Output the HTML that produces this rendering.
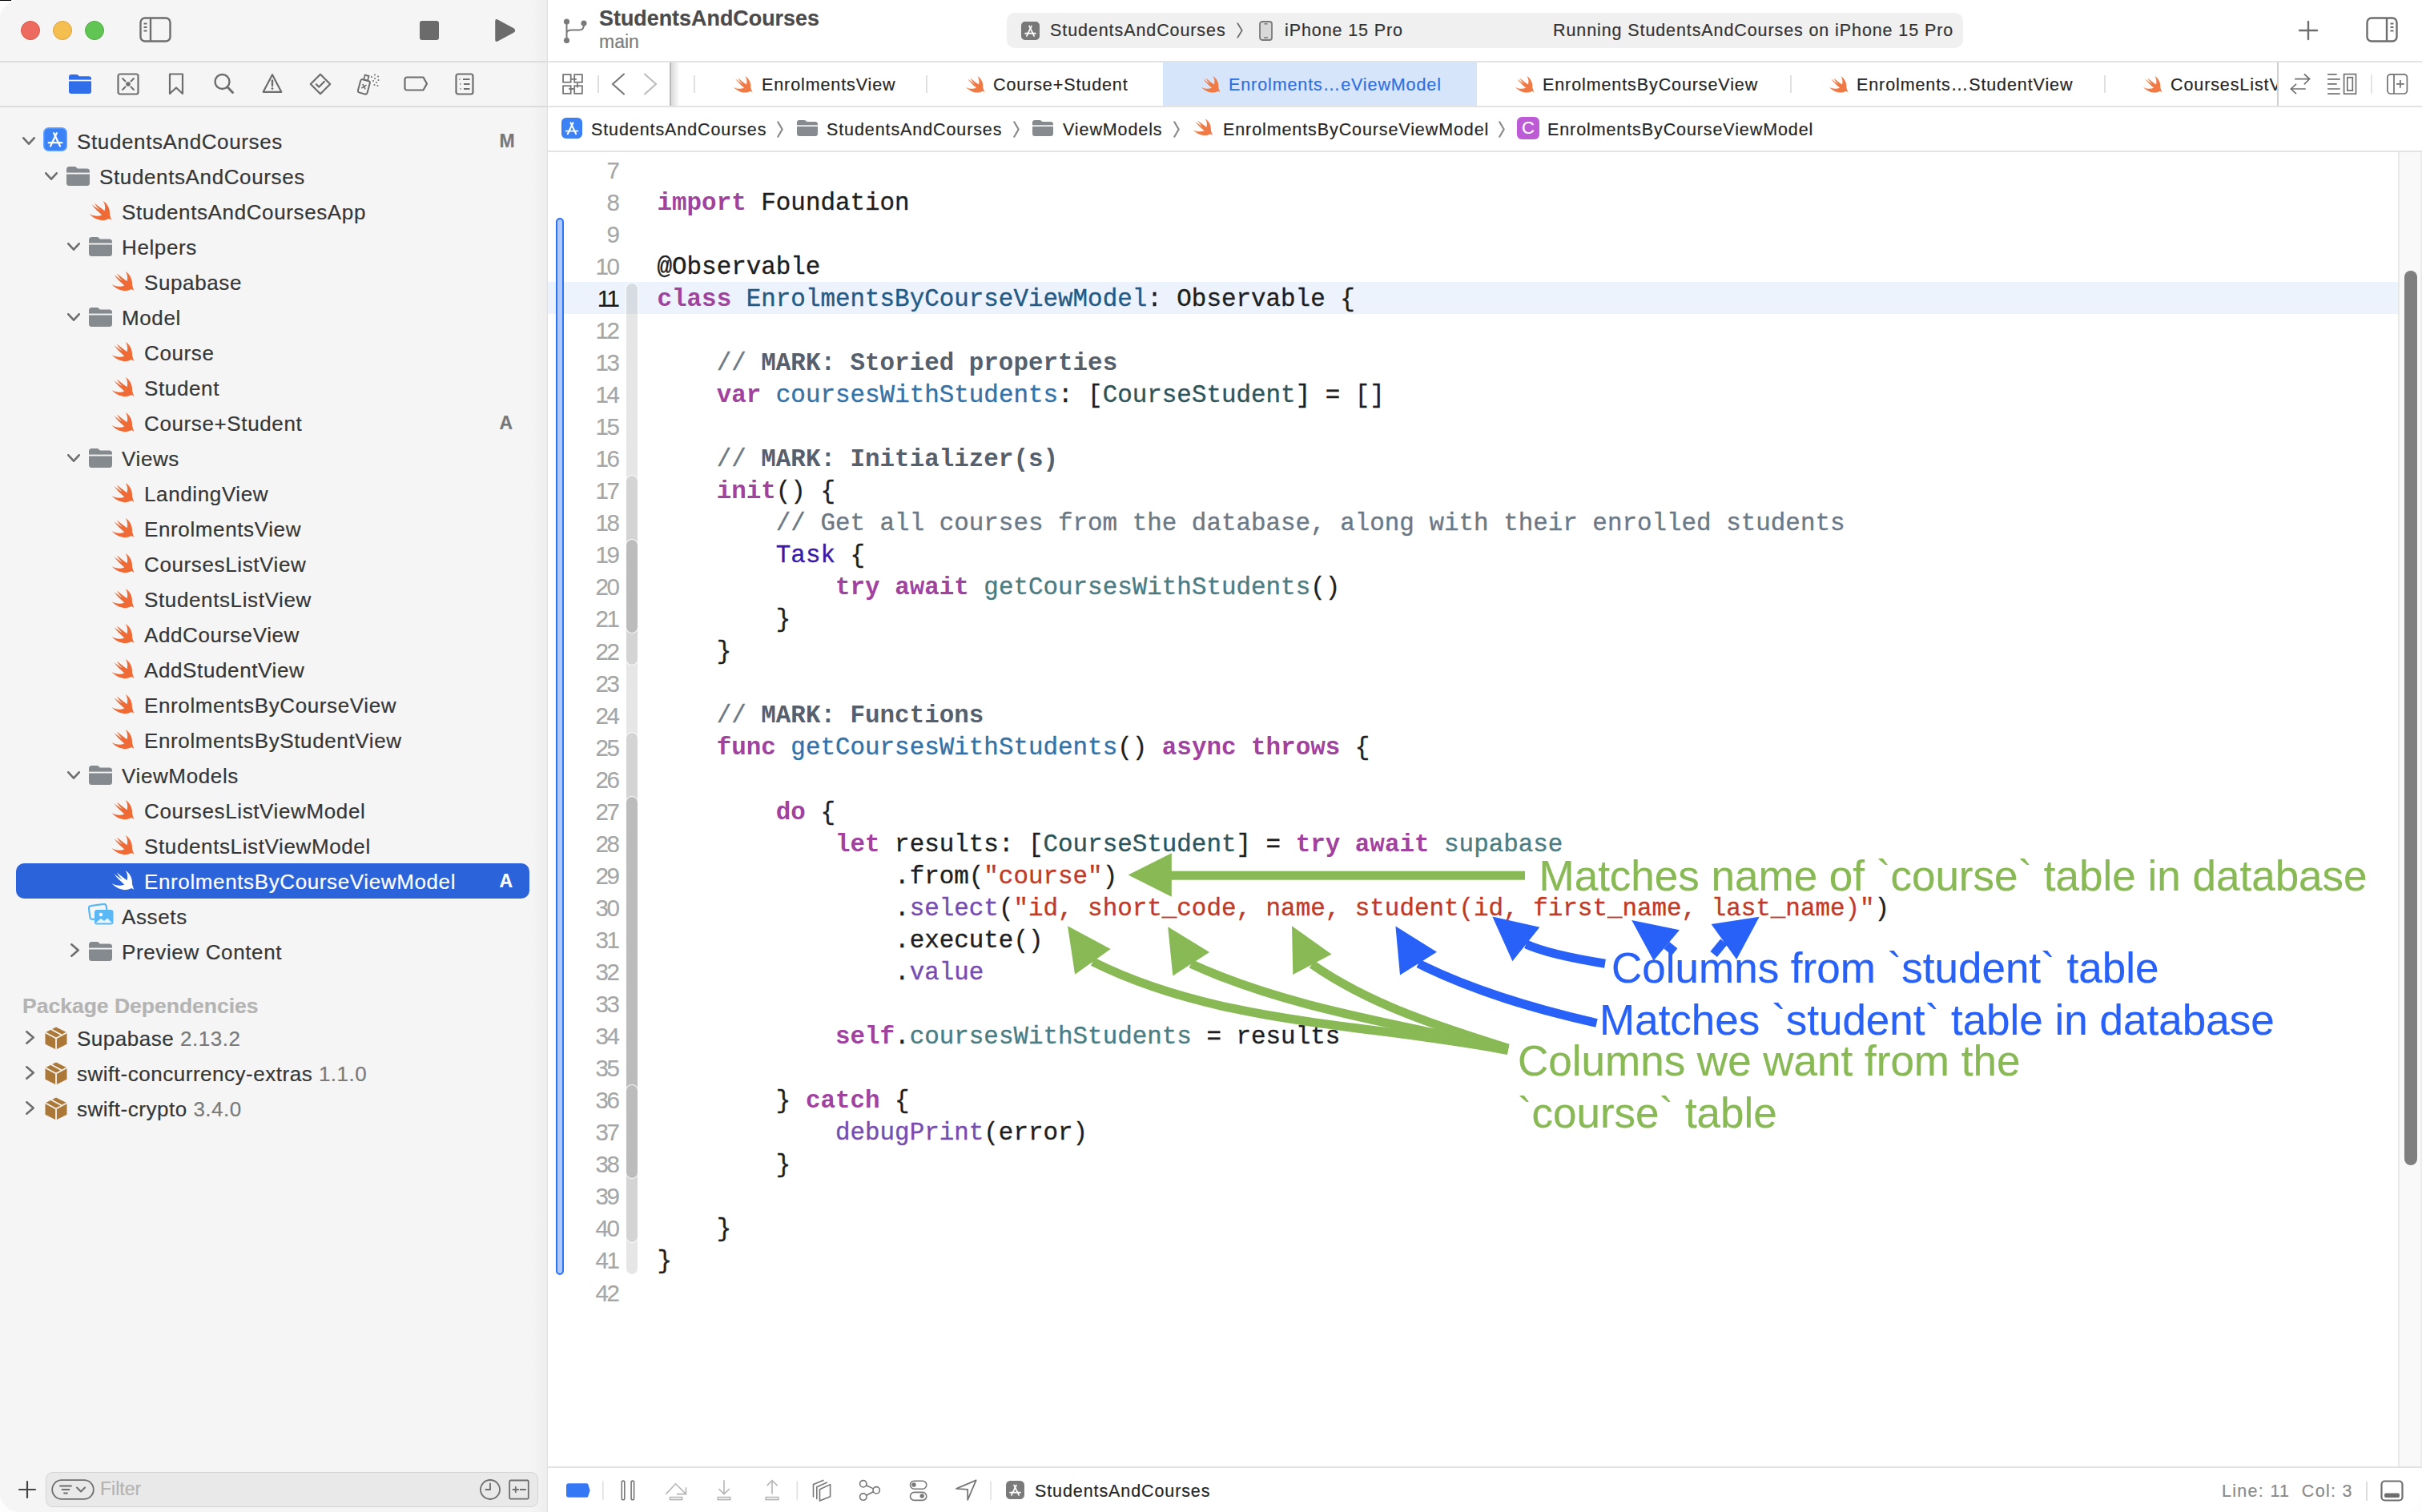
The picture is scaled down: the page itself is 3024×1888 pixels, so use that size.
<!DOCTYPE html><html><head><meta charset="utf-8"><title>Xcode</title><style>
*{margin:0;padding:0;box-sizing:border-box}
html,body{width:3024px;height:1888px;overflow:hidden;background:#fff}
body{position:relative;font-family:"Liberation Sans",sans-serif;color:#262626}
.a{position:absolute}
.t{position:absolute;white-space:pre;line-height:1;-webkit-text-stroke:0.2px currentColor}
.code{font-family:"Liberation Mono",monospace;font-size:30.9px;color:#1e1e1e;-webkit-text-stroke:0.35px currentColor}
.ln{font-family:"Liberation Sans",sans-serif;font-size:29.5px;color:#a3a3a3;text-align:right;width:82px;letter-spacing:-2.4px}
.kw{color:#a0429e;font-weight:bold;-webkit-text-stroke:0}
.cm{color:#6b7886}
.mk{color:#56606c;font-weight:bold;-webkit-text-stroke:0}
.st{color:#c03a28}
.td{color:#235a85}
.od{color:#3272a8}
.pt{color:#2d5559}
.pf{color:#4a7c82}
.syt{color:#3b18a8}
.syf{color:#764cb0}
</style></head><body>
<div class="a" style="left:0;top:0;width:683px;height:1888px;background:#f5f5f5"></div>
<div class="a" style="left:663px;top:0;width:20px;height:1888px;background:linear-gradient(90deg,rgba(0,0,0,0),rgba(0,0,0,0.03))"></div>
<div class="a" style="left:683px;top:0;width:1px;height:1888px;background:#dedede"></div>
<div class="a" style="left:0;top:76px;width:683px;height:2px;background:#dcdcdc"></div>
<div class="a" style="left:0;top:132px;width:683px;height:2px;background:#dcdcdc"></div>
<div class="a" style="left:0;top:0;width:14px;height:1px;background:#000"></div>
<div class="a" style="left:26px;top:26px;width:24px;height:24px;border-radius:50%;background:#ed6a5e;border:1px solid #d4574b"></div>
<div class="a" style="left:66px;top:26px;width:24px;height:24px;border-radius:50%;background:#f5bf4f;border:1px solid #d9a33f"></div>
<div class="a" style="left:106px;top:26px;width:24px;height:24px;border-radius:50%;background:#61c554;border:1px solid #52a944"></div>
<svg class="a" style="left:174px;top:21px;" width="40" height="32" viewBox="0 0 40 32" preserveAspectRatio="none"><rect x="1.5" y="1.5" width="37" height="29" rx="5.5" fill="none" stroke="#6e6e6e" stroke-width="2.4"/><path d="M14 1.5V30.5" stroke="#6e6e6e" stroke-width="2.4"/><path d="M5.5 8.5H9.5M5.5 13H9.5M5.5 17.5H9.5" stroke="#6e6e6e" stroke-width="1.8"/></svg>
<div class="a" style="left:524px;top:26px;width:24px;height:24px;border-radius:3px;background:#6b6b6b"></div>
<svg class="a" style="left:616px;top:23px;" width="28" height="30" viewBox="0 0 28 30" preserveAspectRatio="none"><path d="M3 3.2Q3 1 5 2.1L25.5 13.2Q27.3 15 25.5 16.8L5 27.9Q3 29 3 26.8Z" fill="#6b6b6b" stroke="#6b6b6b" stroke-width="1.5" stroke-linejoin="round"/></svg>
<svg class="a" style="left:86px;top:93px;" width="28" height="24" viewBox="0 0 28 24" preserveAspectRatio="none"><path d="M3 0H9.5C10.5 0 11 .4 11.6 1L13 2.3H25A3 3 0 0 1 28 5.3V21A3 3 0 0 1 25 24H3A3 3 0 0 1 0 21V3A3 3 0 0 1 3 0z" fill="#2f6de9"/><rect x="0" y="6.6" width="28" height="1.8" fill="#f5f5f5"/></svg>
<svg class="a" style="left:146px;top:91px;" width="28" height="28" viewBox="0 0 28 28" preserveAspectRatio="none"><rect x="1.5" y="1.5" width="25" height="25" rx="2.5" fill="none" stroke="#6e6e6e" stroke-width="2.2"/><circle cx="14" cy="14" r="2.8" fill="#6e6e6e"/><path d="M7 7L10.5 10.5M21 7L17.5 10.5M7 21L10.5 17.5M21 21L17.5 17.5" stroke="#6e6e6e" stroke-width="2" stroke-linecap="round"/></svg>
<svg class="a" style="left:210px;top:91px;" width="20" height="28" viewBox="0 0 20 28" preserveAspectRatio="none"><path d="M2 1.5H18V26L10 18.5L2 26Z" fill="none" stroke="#6e6e6e" stroke-width="2.2" stroke-linejoin="round"/></svg>
<svg class="a" style="left:266px;top:91px;" width="28" height="28" viewBox="0 0 28 28" preserveAspectRatio="none"><circle cx="11.5" cy="11" r="9" fill="none" stroke="#6e6e6e" stroke-width="2.4"/><path d="M18 17.8L24.5 24.5" stroke="#6e6e6e" stroke-width="3" stroke-linecap="round"/></svg>
<svg class="a" style="left:327px;top:91px;" width="26" height="26" viewBox="0 0 26 26" preserveAspectRatio="none"><path d="M13 2.2L24.3 23.8H1.7Z" fill="none" stroke="#6e6e6e" stroke-width="2.2" stroke-linejoin="round"/><path d="M13 9.5V16" stroke="#6e6e6e" stroke-width="2.4" stroke-linecap="round"/><circle cx="13" cy="19.6" r="1.4" fill="#6e6e6e"/></svg>
<svg class="a" style="left:386px;top:91px;" width="28" height="28" viewBox="0 0 28 28" preserveAspectRatio="none"><path d="M14 1.8L26.2 14L14 26.2L1.8 14Z" fill="none" stroke="#6e6e6e" stroke-width="2.2" stroke-linejoin="round"/><path d="M8.8 14.2L12.4 17.6L19 10.8" fill="none" stroke="#6e6e6e" stroke-width="2.2" stroke-linecap="round" stroke-linejoin="round"/></svg>
<svg class="a" style="left:445px;top:91px;" width="31" height="28" viewBox="0 0 31 28" preserveAspectRatio="none"><g transform="rotate(15 10 17)"><rect x="3.5" y="9" width="12" height="17" rx="2.5" fill="none" stroke="#6e6e6e" stroke-width="2"/><rect x="7" y="3" width="5" height="6" fill="none" stroke="#6e6e6e" stroke-width="1.8"/><path d="M7 14.5L12 20M12 14.5L7 20" stroke="#6e6e6e" stroke-width="1.6"/></g><g fill="#6e6e6e"><circle cx="19" cy="5" r="1"/><circle cx="23" cy="2.5" r="1"/><circle cx="23" cy="7" r="1"/><circle cx="27" cy="4.5" r="1"/><circle cx="21" cy="10" r="1"/><circle cx="25" cy="12" r="1"/><circle cx="27.5" cy="9" r="1"/><circle cx="22.5" cy="15" r="1"/><circle cx="26.5" cy="16" r="1"/></g></svg>
<svg class="a" style="left:504px;top:95px;" width="31" height="19" viewBox="0 0 31 19" preserveAspectRatio="none"><path d="M4 1.5H24.5L29 9.5L24.5 17.5H4A2.5 2.5 0 0 1 1.5 15V4A2.5 2.5 0 0 1 4 1.5Z" fill="none" stroke="#6e6e6e" stroke-width="2.2" stroke-linejoin="round"/></svg>
<svg class="a" style="left:568px;top:91px;" width="24" height="28" viewBox="0 0 24 28" preserveAspectRatio="none"><rect x="1.5" y="1.5" width="21" height="25" rx="2.5" fill="none" stroke="#6e6e6e" stroke-width="2.2"/><path d="M10 8H18.5M11 14H18.5M11 20H18.5" stroke="#6e6e6e" stroke-width="2"/><path d="M5.5 8H6.5M6.5 14H7.5M6.5 20H7.5" stroke="#6e6e6e" stroke-width="2"/></svg>
<div class="a" style="left:20px;top:1078px;width:641px;height:44px;border-radius:10px;background:#2a63da"></div>
<svg class="a" style="left:28px;top:171.20000000000002px;" width="16" height="10" viewBox="0 0 16 10" preserveAspectRatio="none"><path d="M1.3 1.3L8.0 8.7L14.7 1.3" fill="none" stroke="#6e6e6e" stroke-width="2.6" stroke-linecap="round" stroke-linejoin="round"/></svg>
<svg class="a" style="left:54px;top:159.4px;" width="30" height="30" viewBox="0 0 30 30" preserveAspectRatio="none"><rect x="0.75" y="0.75" width="28.5" height="28.5" rx="6" fill="#3b82f6" stroke="#63a4ff" stroke-width="1.5"/><g stroke="#fff" stroke-width="2.25" stroke-linecap="round" fill="none"><path d="M9.00 23.40L16.80 7.20"/><path d="M13.20 7.20L21.00 23.40"/><path d="M6.60 19.20H23.40"/></g></svg>
<div class="t" style="left:96.0px;top:163.89px;font-size:26px;color:#363636;font-weight:normal;font-family:'Liberation Sans',sans-serif;letter-spacing:0.62px;">StudentsAndCourses</div>
<div class="t" style="left:623.6px;top:165.43px;font-size:23px;color:#777777;font-weight:bold;font-family:'Liberation Sans',sans-serif;letter-spacing:0px;">M</div>
<svg class="a" style="left:56px;top:215.20000000000002px;" width="16" height="10" viewBox="0 0 16 10" preserveAspectRatio="none"><path d="M1.3 1.3L8.0 8.7L14.7 1.3" fill="none" stroke="#6e6e6e" stroke-width="2.6" stroke-linecap="round" stroke-linejoin="round"/></svg>
<svg class="a" style="left:83px;top:208.20000000000002px;" width="29" height="24" viewBox="0 0 29 24" preserveAspectRatio="none"><path d="M3.5 0H10c1 0 1.6.3 2.3 1l1.5 1.4H25.5A3.5 3.5 0 0 1 29 5.9V20.5A3.5 3.5 0 0 1 25.5 24H3.5A3.5 3.5 0 0 1 0 20.5V3.5A3.5 3.5 0 0 1 3.5 0z" fill="#858a8f"/><rect x="0" y="7.6" width="29" height="1.9" fill="#f5f5f5"/></svg>
<div class="t" style="left:124.0px;top:207.89px;font-size:26px;color:#363636;font-weight:normal;font-family:'Liberation Sans',sans-serif;letter-spacing:0.62px;">StudentsAndCourses</div>
<svg class="a" style="left:108.0px;top:246.0px;" width="36.0" height="34.0" viewBox="0 0 36 34" preserveAspectRatio="none"><path d="M20.7 4.9C25.5 8 29.6 13.5 29 22L31.3 29C30 27.8 28.8 27.2 27.6 27.3C22 30.5 12 30.2 3.4 21.1C9 24.3 15 24.2 19.3 22.4C14.5 18.5 9.5 13.5 6.3 9C10 12 13.5 14.5 16.6 16.3C13.8 13.5 11.5 10.5 9.9 7.6C14 10.8 18.5 14.5 22.6 17.2C23.8 13 23.2 8.5 20.7 4.9Z" fill="#f06a36"/></svg>
<div class="t" style="left:152.0px;top:251.89px;font-size:26px;color:#363636;font-weight:normal;font-family:'Liberation Sans',sans-serif;letter-spacing:0.62px;">StudentsAndCoursesApp</div>
<svg class="a" style="left:84px;top:303.2px;" width="16" height="10" viewBox="0 0 16 10" preserveAspectRatio="none"><path d="M1.3 1.3L8.0 8.7L14.7 1.3" fill="none" stroke="#6e6e6e" stroke-width="2.6" stroke-linecap="round" stroke-linejoin="round"/></svg>
<svg class="a" style="left:111px;top:296.2px;" width="29" height="24" viewBox="0 0 29 24" preserveAspectRatio="none"><path d="M3.5 0H10c1 0 1.6.3 2.3 1l1.5 1.4H25.5A3.5 3.5 0 0 1 29 5.9V20.5A3.5 3.5 0 0 1 25.5 24H3.5A3.5 3.5 0 0 1 0 20.5V3.5A3.5 3.5 0 0 1 3.5 0z" fill="#858a8f"/><rect x="0" y="7.6" width="29" height="1.9" fill="#f5f5f5"/></svg>
<div class="t" style="left:152.0px;top:295.89px;font-size:26px;color:#363636;font-weight:normal;font-family:'Liberation Sans',sans-serif;letter-spacing:0.62px;">Helpers</div>
<svg class="a" style="left:136.0px;top:334.0px;" width="36.0" height="34.0" viewBox="0 0 36 34" preserveAspectRatio="none"><path d="M20.7 4.9C25.5 8 29.6 13.5 29 22L31.3 29C30 27.8 28.8 27.2 27.6 27.3C22 30.5 12 30.2 3.4 21.1C9 24.3 15 24.2 19.3 22.4C14.5 18.5 9.5 13.5 6.3 9C10 12 13.5 14.5 16.6 16.3C13.8 13.5 11.5 10.5 9.9 7.6C14 10.8 18.5 14.5 22.6 17.2C23.8 13 23.2 8.5 20.7 4.9Z" fill="#f06a36"/></svg>
<div class="t" style="left:180.0px;top:339.89px;font-size:26px;color:#363636;font-weight:normal;font-family:'Liberation Sans',sans-serif;letter-spacing:0.62px;">Supabase</div>
<svg class="a" style="left:84px;top:391.2px;" width="16" height="10" viewBox="0 0 16 10" preserveAspectRatio="none"><path d="M1.3 1.3L8.0 8.7L14.7 1.3" fill="none" stroke="#6e6e6e" stroke-width="2.6" stroke-linecap="round" stroke-linejoin="round"/></svg>
<svg class="a" style="left:111px;top:384.2px;" width="29" height="24" viewBox="0 0 29 24" preserveAspectRatio="none"><path d="M3.5 0H10c1 0 1.6.3 2.3 1l1.5 1.4H25.5A3.5 3.5 0 0 1 29 5.9V20.5A3.5 3.5 0 0 1 25.5 24H3.5A3.5 3.5 0 0 1 0 20.5V3.5A3.5 3.5 0 0 1 3.5 0z" fill="#858a8f"/><rect x="0" y="7.6" width="29" height="1.9" fill="#f5f5f5"/></svg>
<div class="t" style="left:152.0px;top:383.89px;font-size:26px;color:#363636;font-weight:normal;font-family:'Liberation Sans',sans-serif;letter-spacing:0.62px;">Model</div>
<svg class="a" style="left:136.0px;top:422.0px;" width="36.0" height="34.0" viewBox="0 0 36 34" preserveAspectRatio="none"><path d="M20.7 4.9C25.5 8 29.6 13.5 29 22L31.3 29C30 27.8 28.8 27.2 27.6 27.3C22 30.5 12 30.2 3.4 21.1C9 24.3 15 24.2 19.3 22.4C14.5 18.5 9.5 13.5 6.3 9C10 12 13.5 14.5 16.6 16.3C13.8 13.5 11.5 10.5 9.9 7.6C14 10.8 18.5 14.5 22.6 17.2C23.8 13 23.2 8.5 20.7 4.9Z" fill="#f06a36"/></svg>
<div class="t" style="left:180.0px;top:427.89px;font-size:26px;color:#363636;font-weight:normal;font-family:'Liberation Sans',sans-serif;letter-spacing:0.62px;">Course</div>
<svg class="a" style="left:136.0px;top:466.0px;" width="36.0" height="34.0" viewBox="0 0 36 34" preserveAspectRatio="none"><path d="M20.7 4.9C25.5 8 29.6 13.5 29 22L31.3 29C30 27.8 28.8 27.2 27.6 27.3C22 30.5 12 30.2 3.4 21.1C9 24.3 15 24.2 19.3 22.4C14.5 18.5 9.5 13.5 6.3 9C10 12 13.5 14.5 16.6 16.3C13.8 13.5 11.5 10.5 9.9 7.6C14 10.8 18.5 14.5 22.6 17.2C23.8 13 23.2 8.5 20.7 4.9Z" fill="#f06a36"/></svg>
<div class="t" style="left:180.0px;top:471.89px;font-size:26px;color:#363636;font-weight:normal;font-family:'Liberation Sans',sans-serif;letter-spacing:0.62px;">Student</div>
<svg class="a" style="left:136.0px;top:510.0px;" width="36.0" height="34.0" viewBox="0 0 36 34" preserveAspectRatio="none"><path d="M20.7 4.9C25.5 8 29.6 13.5 29 22L31.3 29C30 27.8 28.8 27.2 27.6 27.3C22 30.5 12 30.2 3.4 21.1C9 24.3 15 24.2 19.3 22.4C14.5 18.5 9.5 13.5 6.3 9C10 12 13.5 14.5 16.6 16.3C13.8 13.5 11.5 10.5 9.9 7.6C14 10.8 18.5 14.5 22.6 17.2C23.8 13 23.2 8.5 20.7 4.9Z" fill="#f06a36"/></svg>
<div class="t" style="left:180.0px;top:515.89px;font-size:26px;color:#363636;font-weight:normal;font-family:'Liberation Sans',sans-serif;letter-spacing:0.62px;">Course+Student</div>
<div class="t" style="left:623.6px;top:517.43px;font-size:23px;color:#777777;font-weight:bold;font-family:'Liberation Sans',sans-serif;letter-spacing:0px;">A</div>
<svg class="a" style="left:84px;top:567.1999999999999px;" width="16" height="10" viewBox="0 0 16 10" preserveAspectRatio="none"><path d="M1.3 1.3L8.0 8.7L14.7 1.3" fill="none" stroke="#6e6e6e" stroke-width="2.6" stroke-linecap="round" stroke-linejoin="round"/></svg>
<svg class="a" style="left:111px;top:560.1999999999999px;" width="29" height="24" viewBox="0 0 29 24" preserveAspectRatio="none"><path d="M3.5 0H10c1 0 1.6.3 2.3 1l1.5 1.4H25.5A3.5 3.5 0 0 1 29 5.9V20.5A3.5 3.5 0 0 1 25.5 24H3.5A3.5 3.5 0 0 1 0 20.5V3.5A3.5 3.5 0 0 1 3.5 0z" fill="#858a8f"/><rect x="0" y="7.6" width="29" height="1.9" fill="#f5f5f5"/></svg>
<div class="t" style="left:152.0px;top:559.89px;font-size:26px;color:#363636;font-weight:normal;font-family:'Liberation Sans',sans-serif;letter-spacing:0.62px;">Views</div>
<svg class="a" style="left:136.0px;top:598.0px;" width="36.0" height="34.0" viewBox="0 0 36 34" preserveAspectRatio="none"><path d="M20.7 4.9C25.5 8 29.6 13.5 29 22L31.3 29C30 27.8 28.8 27.2 27.6 27.3C22 30.5 12 30.2 3.4 21.1C9 24.3 15 24.2 19.3 22.4C14.5 18.5 9.5 13.5 6.3 9C10 12 13.5 14.5 16.6 16.3C13.8 13.5 11.5 10.5 9.9 7.6C14 10.8 18.5 14.5 22.6 17.2C23.8 13 23.2 8.5 20.7 4.9Z" fill="#f06a36"/></svg>
<div class="t" style="left:180.0px;top:603.89px;font-size:26px;color:#363636;font-weight:normal;font-family:'Liberation Sans',sans-serif;letter-spacing:0.62px;">LandingView</div>
<svg class="a" style="left:136.0px;top:642.0px;" width="36.0" height="34.0" viewBox="0 0 36 34" preserveAspectRatio="none"><path d="M20.7 4.9C25.5 8 29.6 13.5 29 22L31.3 29C30 27.8 28.8 27.2 27.6 27.3C22 30.5 12 30.2 3.4 21.1C9 24.3 15 24.2 19.3 22.4C14.5 18.5 9.5 13.5 6.3 9C10 12 13.5 14.5 16.6 16.3C13.8 13.5 11.5 10.5 9.9 7.6C14 10.8 18.5 14.5 22.6 17.2C23.8 13 23.2 8.5 20.7 4.9Z" fill="#f06a36"/></svg>
<div class="t" style="left:180.0px;top:647.89px;font-size:26px;color:#363636;font-weight:normal;font-family:'Liberation Sans',sans-serif;letter-spacing:0.62px;">EnrolmentsView</div>
<svg class="a" style="left:136.0px;top:686.0px;" width="36.0" height="34.0" viewBox="0 0 36 34" preserveAspectRatio="none"><path d="M20.7 4.9C25.5 8 29.6 13.5 29 22L31.3 29C30 27.8 28.8 27.2 27.6 27.3C22 30.5 12 30.2 3.4 21.1C9 24.3 15 24.2 19.3 22.4C14.5 18.5 9.5 13.5 6.3 9C10 12 13.5 14.5 16.6 16.3C13.8 13.5 11.5 10.5 9.9 7.6C14 10.8 18.5 14.5 22.6 17.2C23.8 13 23.2 8.5 20.7 4.9Z" fill="#f06a36"/></svg>
<div class="t" style="left:180.0px;top:691.89px;font-size:26px;color:#363636;font-weight:normal;font-family:'Liberation Sans',sans-serif;letter-spacing:0.62px;">CoursesListView</div>
<svg class="a" style="left:136.0px;top:730.0px;" width="36.0" height="34.0" viewBox="0 0 36 34" preserveAspectRatio="none"><path d="M20.7 4.9C25.5 8 29.6 13.5 29 22L31.3 29C30 27.8 28.8 27.2 27.6 27.3C22 30.5 12 30.2 3.4 21.1C9 24.3 15 24.2 19.3 22.4C14.5 18.5 9.5 13.5 6.3 9C10 12 13.5 14.5 16.6 16.3C13.8 13.5 11.5 10.5 9.9 7.6C14 10.8 18.5 14.5 22.6 17.2C23.8 13 23.2 8.5 20.7 4.9Z" fill="#f06a36"/></svg>
<div class="t" style="left:180.0px;top:735.89px;font-size:26px;color:#363636;font-weight:normal;font-family:'Liberation Sans',sans-serif;letter-spacing:0.62px;">StudentsListView</div>
<svg class="a" style="left:136.0px;top:774.0px;" width="36.0" height="34.0" viewBox="0 0 36 34" preserveAspectRatio="none"><path d="M20.7 4.9C25.5 8 29.6 13.5 29 22L31.3 29C30 27.8 28.8 27.2 27.6 27.3C22 30.5 12 30.2 3.4 21.1C9 24.3 15 24.2 19.3 22.4C14.5 18.5 9.5 13.5 6.3 9C10 12 13.5 14.5 16.6 16.3C13.8 13.5 11.5 10.5 9.9 7.6C14 10.8 18.5 14.5 22.6 17.2C23.8 13 23.2 8.5 20.7 4.9Z" fill="#f06a36"/></svg>
<div class="t" style="left:180.0px;top:779.89px;font-size:26px;color:#363636;font-weight:normal;font-family:'Liberation Sans',sans-serif;letter-spacing:0.62px;">AddCourseView</div>
<svg class="a" style="left:136.0px;top:818.0px;" width="36.0" height="34.0" viewBox="0 0 36 34" preserveAspectRatio="none"><path d="M20.7 4.9C25.5 8 29.6 13.5 29 22L31.3 29C30 27.8 28.8 27.2 27.6 27.3C22 30.5 12 30.2 3.4 21.1C9 24.3 15 24.2 19.3 22.4C14.5 18.5 9.5 13.5 6.3 9C10 12 13.5 14.5 16.6 16.3C13.8 13.5 11.5 10.5 9.9 7.6C14 10.8 18.5 14.5 22.6 17.2C23.8 13 23.2 8.5 20.7 4.9Z" fill="#f06a36"/></svg>
<div class="t" style="left:180.0px;top:823.89px;font-size:26px;color:#363636;font-weight:normal;font-family:'Liberation Sans',sans-serif;letter-spacing:0.62px;">AddStudentView</div>
<svg class="a" style="left:136.0px;top:862.0px;" width="36.0" height="34.0" viewBox="0 0 36 34" preserveAspectRatio="none"><path d="M20.7 4.9C25.5 8 29.6 13.5 29 22L31.3 29C30 27.8 28.8 27.2 27.6 27.3C22 30.5 12 30.2 3.4 21.1C9 24.3 15 24.2 19.3 22.4C14.5 18.5 9.5 13.5 6.3 9C10 12 13.5 14.5 16.6 16.3C13.8 13.5 11.5 10.5 9.9 7.6C14 10.8 18.5 14.5 22.6 17.2C23.8 13 23.2 8.5 20.7 4.9Z" fill="#f06a36"/></svg>
<div class="t" style="left:180.0px;top:867.89px;font-size:26px;color:#363636;font-weight:normal;font-family:'Liberation Sans',sans-serif;letter-spacing:0.62px;">EnrolmentsByCourseView</div>
<svg class="a" style="left:136.0px;top:906.0px;" width="36.0" height="34.0" viewBox="0 0 36 34" preserveAspectRatio="none"><path d="M20.7 4.9C25.5 8 29.6 13.5 29 22L31.3 29C30 27.8 28.8 27.2 27.6 27.3C22 30.5 12 30.2 3.4 21.1C9 24.3 15 24.2 19.3 22.4C14.5 18.5 9.5 13.5 6.3 9C10 12 13.5 14.5 16.6 16.3C13.8 13.5 11.5 10.5 9.9 7.6C14 10.8 18.5 14.5 22.6 17.2C23.8 13 23.2 8.5 20.7 4.9Z" fill="#f06a36"/></svg>
<div class="t" style="left:180.0px;top:911.89px;font-size:26px;color:#363636;font-weight:normal;font-family:'Liberation Sans',sans-serif;letter-spacing:0.62px;">EnrolmentsByStudentView</div>
<svg class="a" style="left:84px;top:963.1999999999999px;" width="16" height="10" viewBox="0 0 16 10" preserveAspectRatio="none"><path d="M1.3 1.3L8.0 8.7L14.7 1.3" fill="none" stroke="#6e6e6e" stroke-width="2.6" stroke-linecap="round" stroke-linejoin="round"/></svg>
<svg class="a" style="left:111px;top:956.1999999999999px;" width="29" height="24" viewBox="0 0 29 24" preserveAspectRatio="none"><path d="M3.5 0H10c1 0 1.6.3 2.3 1l1.5 1.4H25.5A3.5 3.5 0 0 1 29 5.9V20.5A3.5 3.5 0 0 1 25.5 24H3.5A3.5 3.5 0 0 1 0 20.5V3.5A3.5 3.5 0 0 1 3.5 0z" fill="#858a8f"/><rect x="0" y="7.6" width="29" height="1.9" fill="#f5f5f5"/></svg>
<div class="t" style="left:152.0px;top:955.89px;font-size:26px;color:#363636;font-weight:normal;font-family:'Liberation Sans',sans-serif;letter-spacing:0.62px;">ViewModels</div>
<svg class="a" style="left:136.0px;top:994.0px;" width="36.0" height="34.0" viewBox="0 0 36 34" preserveAspectRatio="none"><path d="M20.7 4.9C25.5 8 29.6 13.5 29 22L31.3 29C30 27.8 28.8 27.2 27.6 27.3C22 30.5 12 30.2 3.4 21.1C9 24.3 15 24.2 19.3 22.4C14.5 18.5 9.5 13.5 6.3 9C10 12 13.5 14.5 16.6 16.3C13.8 13.5 11.5 10.5 9.9 7.6C14 10.8 18.5 14.5 22.6 17.2C23.8 13 23.2 8.5 20.7 4.9Z" fill="#f06a36"/></svg>
<div class="t" style="left:180.0px;top:999.89px;font-size:26px;color:#363636;font-weight:normal;font-family:'Liberation Sans',sans-serif;letter-spacing:0.62px;">CoursesListViewModel</div>
<svg class="a" style="left:136.0px;top:1038.0px;" width="36.0" height="34.0" viewBox="0 0 36 34" preserveAspectRatio="none"><path d="M20.7 4.9C25.5 8 29.6 13.5 29 22L31.3 29C30 27.8 28.8 27.2 27.6 27.3C22 30.5 12 30.2 3.4 21.1C9 24.3 15 24.2 19.3 22.4C14.5 18.5 9.5 13.5 6.3 9C10 12 13.5 14.5 16.6 16.3C13.8 13.5 11.5 10.5 9.9 7.6C14 10.8 18.5 14.5 22.6 17.2C23.8 13 23.2 8.5 20.7 4.9Z" fill="#f06a36"/></svg>
<div class="t" style="left:180.0px;top:1043.89px;font-size:26px;color:#363636;font-weight:normal;font-family:'Liberation Sans',sans-serif;letter-spacing:0.62px;">StudentsListViewModel</div>
<svg class="a" style="left:136.0px;top:1082.0px;" width="36.0" height="34.0" viewBox="0 0 36 34" preserveAspectRatio="none"><path d="M20.7 4.9C25.5 8 29.6 13.5 29 22L31.3 29C30 27.8 28.8 27.2 27.6 27.3C22 30.5 12 30.2 3.4 21.1C9 24.3 15 24.2 19.3 22.4C14.5 18.5 9.5 13.5 6.3 9C10 12 13.5 14.5 16.6 16.3C13.8 13.5 11.5 10.5 9.9 7.6C14 10.8 18.5 14.5 22.6 17.2C23.8 13 23.2 8.5 20.7 4.9Z" fill="#ffffff"/></svg>
<div class="t" style="left:180.0px;top:1087.89px;font-size:26px;color:#ffffff;font-weight:normal;font-family:'Liberation Sans',sans-serif;letter-spacing:0.62px;">EnrolmentsByCourseViewModel</div>
<div class="t" style="left:623.6px;top:1089.43px;font-size:23px;color:#ffffff;font-weight:bold;font-family:'Liberation Sans',sans-serif;letter-spacing:0px;">A</div>
<svg class="a" style="left:109.5px;top:1128.4px;" width="33" height="28" viewBox="0 0 33 28" preserveAspectRatio="none"><rect x="1.5" y="2" width="22" height="17" rx="3" transform="rotate(-8 12 10)" fill="#f5f5f5" stroke="#5ab8f5" stroke-width="2.2"/><rect x="8" y="8" width="23.5" height="18.5" rx="3" fill="#5ab8f5"/><circle cx="16" cy="14" r="2.2" fill="#fff"/><path d="M9.5 24.5L16 19L20 22L24 18.5L30 24.5Z" fill="#fff" opacity=".85"/></svg>
<div class="t" style="left:152.0px;top:1131.89px;font-size:26px;color:#363636;font-weight:normal;font-family:'Liberation Sans',sans-serif;letter-spacing:0.62px;">Assets</div>
<svg class="a" style="left:88px;top:1178.4px;" width="11" height="17" viewBox="0 0 11 17" preserveAspectRatio="none"><path d="M1.3 1.3L9.7 8.5L1.3 15.7" fill="none" stroke="#6e6e6e" stroke-width="2.6" stroke-linecap="round" stroke-linejoin="round"/></svg>
<svg class="a" style="left:111px;top:1176.2px;" width="29" height="24" viewBox="0 0 29 24" preserveAspectRatio="none"><path d="M3.5 0H10c1 0 1.6.3 2.3 1l1.5 1.4H25.5A3.5 3.5 0 0 1 29 5.9V20.5A3.5 3.5 0 0 1 25.5 24H3.5A3.5 3.5 0 0 1 0 20.5V3.5A3.5 3.5 0 0 1 3.5 0z" fill="#858a8f"/><rect x="0" y="7.6" width="29" height="1.9" fill="#f5f5f5"/></svg>
<div class="t" style="left:152.0px;top:1175.89px;font-size:26px;color:#363636;font-weight:normal;font-family:'Liberation Sans',sans-serif;letter-spacing:0.62px;">Preview Content</div>
<div class="t" style="left:28.0px;top:1242.57px;font-size:26.5px;color:#b4b4b4;font-weight:bold;font-family:'Liberation Sans',sans-serif;letter-spacing:0px;">Package Dependencies</div>
<svg class="a" style="left:32px;top:1287.4px;" width="11" height="17" viewBox="0 0 11 17" preserveAspectRatio="none"><path d="M1.3 1.3L9.7 8.5L1.3 15.7" fill="none" stroke="#6e6e6e" stroke-width="2.6" stroke-linecap="round" stroke-linejoin="round"/></svg>
<svg class="a" style="left:56px;top:1281.9px;" width="28" height="29" viewBox="0 0 28 30" preserveAspectRatio="none"><path d="M14 0.5L27.5 7.5V22.5L14 29.5L0.5 22.5V7.5Z" fill="#ab7838"/><path d="M14 15L27.5 7.5M14 15L0.5 7.5M14 15V29.5" stroke="#f5f5f5" stroke-width="1.8" fill="none"/><path d="M7.8 3.4L20.8 10.6" stroke="#f5f5f5" stroke-width="1.8" fill="none"/></svg>
<div class="t" style="left:96.0px;top:1284.39px;font-size:26px;color:#363636;font-weight:normal;font-family:'Liberation Sans',sans-serif;letter-spacing:0.52px;">Supabase</div>
<div class="t" style="left:225.0px;top:1284.39px;font-size:26px;color:#7a7a7a;font-weight:normal;font-family:'Liberation Sans',sans-serif;letter-spacing:0.52px;">2.13.2</div>
<svg class="a" style="left:32px;top:1331.4px;" width="11" height="17" viewBox="0 0 11 17" preserveAspectRatio="none"><path d="M1.3 1.3L9.7 8.5L1.3 15.7" fill="none" stroke="#6e6e6e" stroke-width="2.6" stroke-linecap="round" stroke-linejoin="round"/></svg>
<svg class="a" style="left:56px;top:1325.9px;" width="28" height="29" viewBox="0 0 28 30" preserveAspectRatio="none"><path d="M14 0.5L27.5 7.5V22.5L14 29.5L0.5 22.5V7.5Z" fill="#ab7838"/><path d="M14 15L27.5 7.5M14 15L0.5 7.5M14 15V29.5" stroke="#f5f5f5" stroke-width="1.8" fill="none"/><path d="M7.8 3.4L20.8 10.6" stroke="#f5f5f5" stroke-width="1.8" fill="none"/></svg>
<div class="t" style="left:96.0px;top:1328.39px;font-size:26px;color:#363636;font-weight:normal;font-family:'Liberation Sans',sans-serif;letter-spacing:0.52px;">swift-concurrency-extras</div>
<div class="t" style="left:397.9px;top:1328.39px;font-size:26px;color:#7a7a7a;font-weight:normal;font-family:'Liberation Sans',sans-serif;letter-spacing:0.52px;">1.1.0</div>
<svg class="a" style="left:32px;top:1375.4px;" width="11" height="17" viewBox="0 0 11 17" preserveAspectRatio="none"><path d="M1.3 1.3L9.7 8.5L1.3 15.7" fill="none" stroke="#6e6e6e" stroke-width="2.6" stroke-linecap="round" stroke-linejoin="round"/></svg>
<svg class="a" style="left:56px;top:1369.9px;" width="28" height="29" viewBox="0 0 28 30" preserveAspectRatio="none"><path d="M14 0.5L27.5 7.5V22.5L14 29.5L0.5 22.5V7.5Z" fill="#ab7838"/><path d="M14 15L27.5 7.5M14 15L0.5 7.5M14 15V29.5" stroke="#f5f5f5" stroke-width="1.8" fill="none"/><path d="M7.8 3.4L20.8 10.6" stroke="#f5f5f5" stroke-width="1.8" fill="none"/></svg>
<div class="t" style="left:96.0px;top:1372.39px;font-size:26px;color:#363636;font-weight:normal;font-family:'Liberation Sans',sans-serif;letter-spacing:0.52px;">swift-crypto</div>
<div class="t" style="left:241.4px;top:1372.39px;font-size:26px;color:#7a7a7a;font-weight:normal;font-family:'Liberation Sans',sans-serif;letter-spacing:0.52px;">3.4.0</div>
<svg class="a" style="left:22px;top:1848px;" width="24" height="24" viewBox="0 0 24 24" preserveAspectRatio="none"><path d="M12 2V22M2 12H22" stroke="#464646" stroke-width="2.2" stroke-linecap="round"/></svg>
<div class="a" style="left:57px;top:1838px;width:615px;height:44px;border-radius:9px;background:#e9e9e9;border:1px solid #d3d3d3"></div>
<svg class="a" style="left:64px;top:1847px;" width="54" height="26" viewBox="0 0 54 26" preserveAspectRatio="none"><rect x="1.2" y="1.2" width="51.6" height="23.6" rx="11.8" fill="none" stroke="#6e6e6e" stroke-width="1.8"/><path d="M11 8.5H25M13.5 13H22.5M16 17.5H20" stroke="#6e6e6e" stroke-width="1.8" stroke-linecap="round"/><path d="M32 10.5L37 15.5L42 10.5" fill="none" stroke="#6e6e6e" stroke-width="2" stroke-linecap="round" stroke-linejoin="round"/></svg>
<div class="t" style="left:125.0px;top:1848.03px;font-size:23px;color:#b3b3b3;font-weight:normal;font-family:'Liberation Sans',sans-serif;letter-spacing:0px;">Filter</div>
<svg class="a" style="left:598px;top:1846px;" width="28" height="28" viewBox="0 0 28 28" preserveAspectRatio="none"><circle cx="14" cy="14" r="12" fill="none" stroke="#6e6e6e" stroke-width="1.8"/><path d="M14 6.5V14H8.5" fill="none" stroke="#6e6e6e" stroke-width="1.8" stroke-linecap="round"/></svg>
<svg class="a" style="left:633px;top:1846px;" width="29" height="28" viewBox="0 0 29 28" preserveAspectRatio="none"><rect x="3.2" y="2.5" width="23.6" height="23.2" rx="1.5" fill="none" stroke="#6e6e6e" stroke-width="1.8"/><path d="M10.8 10V18M6.8 14H14.8M16 14H23.8" stroke="#6e6e6e" stroke-width="1.8"/></svg>
<div class="a" style="left:684px;top:76px;width:2340px;height:2px;background:#e3e3e3"></div>
<div class="a" style="left:684px;top:132px;width:2340px;height:2px;background:#e3e3e3"></div>
<div class="a" style="left:684px;top:188px;width:2340px;height:2px;background:#e3e3e3"></div>
<div class="a" style="left:684px;top:1831px;width:2340px;height:2px;background:#e3e3e3"></div>
<svg class="a" style="left:702px;top:22px;" width="32" height="34" viewBox="0 0 32 34" preserveAspectRatio="none"><g fill="#7a7a7a"><circle cx="5.5" cy="5" r="3.6"/><circle cx="5.5" cy="28.5" r="3.6"/><circle cx="27" cy="7" r="3.6"/></g><path d="M5.5 5V28.5M5.5 19.5Q5.5 15.5 12 15.5H21Q27 15.5 27 9" fill="none" stroke="#7a7a7a" stroke-width="2"/></svg>
<div class="t" style="left:748.0px;top:10.23px;font-size:26.9px;color:#4b4b4b;font-weight:bold;font-family:'Liberation Sans',sans-serif;letter-spacing:0px;">StudentsAndCourses</div>
<div class="t" style="left:748.0px;top:40.53px;font-size:23px;color:#7c7c7c;font-weight:normal;font-family:'Liberation Sans',sans-serif;letter-spacing:0px;">main</div>
<div class="a" style="left:1257px;top:16px;width:1194px;height:44px;border-radius:10px;background:#f0f0f0"></div>
<svg class="a" style="left:1275px;top:27px;" width="23" height="23" viewBox="0 0 23 23" preserveAspectRatio="none"><rect x="0.75" y="0.75" width="21.5" height="21.5" rx="4" fill="#787878" stroke="#787878" stroke-width="1.5"/><g stroke="#fff" stroke-width="1.72" stroke-linecap="round" fill="none"><path d="M6.90 17.94L12.88 5.52"/><path d="M10.12 5.52L16.10 17.94"/><path d="M5.06 14.72H17.94"/></g></svg>
<div class="t" style="left:1311.0px;top:27.80px;font-size:21.5px;color:#333333;font-weight:normal;font-family:'Liberation Sans',sans-serif;letter-spacing:0.91px;">StudentsAndCourses</div>
<svg class="a" style="left:1544px;top:28px;" width="8" height="20" viewBox="0 0 8 20" preserveAspectRatio="none"><path d="M1.3 1.3L6.7 10.0L1.3 18.7" fill="none" stroke="#6e6e6e" stroke-width="1.8" stroke-linecap="round" stroke-linejoin="round"/></svg>
<svg class="a" style="left:1572px;top:26px;" width="17" height="25" viewBox="0 0 17 25" preserveAspectRatio="none"><rect x="1" y="1" width="15" height="23" rx="3" fill="#d9d9d9" stroke="#7a7a7a" stroke-width="1.8"/><path d="M6 21H11" stroke="#7a7a7a" stroke-width="1.5"/><path d="M6.5 3.8H10.5" stroke="#7a7a7a" stroke-width="1.5"/></svg>
<div class="t" style="left:1604.0px;top:27.80px;font-size:21.5px;color:#333333;font-weight:normal;font-family:'Liberation Sans',sans-serif;letter-spacing:0.9px;">iPhone 15 Pro</div>
<div class="t" style="left:1939.0px;top:27.80px;font-size:21.5px;color:#333333;font-weight:normal;font-family:'Liberation Sans',sans-serif;letter-spacing:0.9px;">Running StudentsAndCourses on iPhone 15 Pro</div>
<svg class="a" style="left:2868px;top:25px;" width="28" height="26" viewBox="0 0 28 26" preserveAspectRatio="none"><path d="M14 2V24M3 13H25" stroke="#6e6e6e" stroke-width="2.4" stroke-linecap="round"/></svg>
<svg class="a" style="left:2954px;top:21px;" width="40" height="32" viewBox="0 0 40 32" preserveAspectRatio="none"><rect x="1.5" y="1.5" width="37" height="29" rx="5.5" fill="none" stroke="#6e6e6e" stroke-width="2.4"/><path d="M26 1.5V30.5" stroke="#6e6e6e" stroke-width="2.4"/><path d="M30.5 8.5H34.5M30.5 13H34.5M30.5 17.5H34.5" stroke="#6e6e6e" stroke-width="1.8"/></svg>
<svg class="a" style="left:700px;top:90px;" width="30" height="30" viewBox="0 0 30 30" preserveAspectRatio="none"><g fill="none" stroke="#777" stroke-width="1.8"><rect x="3.1" y="3.1" width="9.6" height="9.6"/><rect x="17.2" y="3.1" width="9.7" height="9.6"/><rect x="3.1" y="17.2" width="9.6" height="9.6"/><rect x="17.2" y="17.2" width="9.7" height="9.6"/><path d="M12.7 8.9H19.9M21 13.6V19.6M16.3 21H10.3"/></g></svg>
<div class="a" style="left:746px;top:94px;width:2px;height:22px;background:#dddddd"></div>
<svg class="a" style="left:762px;top:90px;" width="20" height="30" viewBox="0 0 20 30" preserveAspectRatio="none"><path d="M17 2.5L3 15L17 27.5" fill="none" stroke="#787878" stroke-width="2.1" stroke-linecap="round" stroke-linejoin="miter"/></svg>
<svg class="a" style="left:802px;top:90px;" width="20" height="30" viewBox="0 0 20 30" preserveAspectRatio="none"><path d="M3 2.5L17 15L3 27.5" fill="none" stroke="#bcbcbc" stroke-width="2.1" stroke-linecap="round" stroke-linejoin="miter"/></svg>
<div class="a" style="left:836px;top:78px;width:12px;height:54px;background:linear-gradient(90deg,#bababa 0,#bababa 2px,#d9d9d9 2px,#ffffff 13px)"></div>
<div class="a" style="left:1452px;top:78px;width:392px;height:54px;background:#d6e5fa"></div>
<div class="a" style="left:866px;top:94px;width:2px;height:22px;background:#e0e0e0"></div>
<div class="a" style="left:1156px;top:94px;width:2px;height:22px;background:#e0e0e0"></div>
<div class="a" style="left:2235px;top:94px;width:2px;height:22px;background:#e0e0e0"></div>
<div class="a" style="left:2627px;top:94px;width:2px;height:22px;background:#e0e0e0"></div>
<svg class="a" style="left:913.14px;top:90.88px;" width="30.24" height="28.56" viewBox="0 0 36 34" preserveAspectRatio="none"><path d="M20.7 4.9C25.5 8 29.6 13.5 29 22L31.3 29C30 27.8 28.8 27.2 27.6 27.3C22 30.5 12 30.2 3.4 21.1C9 24.3 15 24.2 19.3 22.4C14.5 18.5 9.5 13.5 6.3 9C10 12 13.5 14.5 16.6 16.3C13.8 13.5 11.5 10.5 9.9 7.6C14 10.8 18.5 14.5 22.6 17.2C23.8 13 23.2 8.5 20.7 4.9Z" fill="#f07a45"/></svg>
<div class="t" style="left:951.0px;top:95.80px;font-size:21.5px;color:#262626;font-weight:normal;font-family:'Liberation Sans',sans-serif;letter-spacing:0.9px;">EnrolmentsView</div>
<svg class="a" style="left:1203.14px;top:90.88px;" width="30.24" height="28.56" viewBox="0 0 36 34" preserveAspectRatio="none"><path d="M20.7 4.9C25.5 8 29.6 13.5 29 22L31.3 29C30 27.8 28.8 27.2 27.6 27.3C22 30.5 12 30.2 3.4 21.1C9 24.3 15 24.2 19.3 22.4C14.5 18.5 9.5 13.5 6.3 9C10 12 13.5 14.5 16.6 16.3C13.8 13.5 11.5 10.5 9.9 7.6C14 10.8 18.5 14.5 22.6 17.2C23.8 13 23.2 8.5 20.7 4.9Z" fill="#f07a45"/></svg>
<div class="t" style="left:1240.0px;top:95.80px;font-size:21.5px;color:#262626;font-weight:normal;font-family:'Liberation Sans',sans-serif;letter-spacing:0.9px;">Course+Student</div>
<svg class="a" style="left:1497.14px;top:90.88px;" width="30.24" height="28.56" viewBox="0 0 36 34" preserveAspectRatio="none"><path d="M20.7 4.9C25.5 8 29.6 13.5 29 22L31.3 29C30 27.8 28.8 27.2 27.6 27.3C22 30.5 12 30.2 3.4 21.1C9 24.3 15 24.2 19.3 22.4C14.5 18.5 9.5 13.5 6.3 9C10 12 13.5 14.5 16.6 16.3C13.8 13.5 11.5 10.5 9.9 7.6C14 10.8 18.5 14.5 22.6 17.2C23.8 13 23.2 8.5 20.7 4.9Z" fill="#f07a45"/></svg>
<div class="t" style="left:1534.0px;top:95.80px;font-size:21.5px;color:#2f6fde;font-weight:normal;font-family:'Liberation Sans',sans-serif;letter-spacing:0.9px;">Enrolments…eViewModel</div>
<svg class="a" style="left:1889.14px;top:90.88px;" width="30.24" height="28.56" viewBox="0 0 36 34" preserveAspectRatio="none"><path d="M20.7 4.9C25.5 8 29.6 13.5 29 22L31.3 29C30 27.8 28.8 27.2 27.6 27.3C22 30.5 12 30.2 3.4 21.1C9 24.3 15 24.2 19.3 22.4C14.5 18.5 9.5 13.5 6.3 9C10 12 13.5 14.5 16.6 16.3C13.8 13.5 11.5 10.5 9.9 7.6C14 10.8 18.5 14.5 22.6 17.2C23.8 13 23.2 8.5 20.7 4.9Z" fill="#f07a45"/></svg>
<div class="t" style="left:1926.0px;top:95.80px;font-size:21.5px;color:#262626;font-weight:normal;font-family:'Liberation Sans',sans-serif;letter-spacing:0.9px;">EnrolmentsByCourseView</div>
<svg class="a" style="left:2281.14px;top:90.88px;" width="30.24" height="28.56" viewBox="0 0 36 34" preserveAspectRatio="none"><path d="M20.7 4.9C25.5 8 29.6 13.5 29 22L31.3 29C30 27.8 28.8 27.2 27.6 27.3C22 30.5 12 30.2 3.4 21.1C9 24.3 15 24.2 19.3 22.4C14.5 18.5 9.5 13.5 6.3 9C10 12 13.5 14.5 16.6 16.3C13.8 13.5 11.5 10.5 9.9 7.6C14 10.8 18.5 14.5 22.6 17.2C23.8 13 23.2 8.5 20.7 4.9Z" fill="#f07a45"/></svg>
<div class="t" style="left:2318.0px;top:95.80px;font-size:21.5px;color:#262626;font-weight:normal;font-family:'Liberation Sans',sans-serif;letter-spacing:0.9px;">Enrolments…StudentView</div>
<svg class="a" style="left:2673.14px;top:90.88px;" width="30.24" height="28.56" viewBox="0 0 36 34" preserveAspectRatio="none"><path d="M20.7 4.9C25.5 8 29.6 13.5 29 22L31.3 29C30 27.8 28.8 27.2 27.6 27.3C22 30.5 12 30.2 3.4 21.1C9 24.3 15 24.2 19.3 22.4C14.5 18.5 9.5 13.5 6.3 9C10 12 13.5 14.5 16.6 16.3C13.8 13.5 11.5 10.5 9.9 7.6C14 10.8 18.5 14.5 22.6 17.2C23.8 13 23.2 8.5 20.7 4.9Z" fill="#f07a45"/></svg>
<div class="t" style="left:2710.0px;top:95.80px;font-size:21.5px;color:#262626;font-weight:normal;font-family:'Liberation Sans',sans-serif;letter-spacing:0.9px;">CoursesListView</div>
<div class="a" style="left:2843px;top:78px;width:181px;height:54px;background:#fff"></div>
<div class="a" style="left:2843px;top:78px;width:2px;height:54px;background:#cfcfcf"></div>
<svg class="a" style="left:2840px;top:80px;" width="184" height="50" viewBox="0 0 184 50" preserveAspectRatio="none"><g fill="none" stroke="#727272" stroke-width="1.7"><path d="M25.1 18.6H43.4M36.9 12.5L43.6 18.6L36.9 25.3"/><path d="M20.6 31H38.8M27 24.8L20.4 31L27 37.2"/><path d="M66.1 12.9H77.7M66.1 18.8H81.7M66.1 24.9H77.7M66.1 31H81.7M66.1 37.1H81.7"/><rect x="86.6" y="12.6" width="14.9" height="24.6"/><rect x="90.8" y="16.7" width="6.5" height="16.4"/><rect x="140.9" y="12.8" width="24.5" height="24.2" rx="4"/><path d="M149 12.8V37M156.9 20V29.8M152 24.9H161.8"/></g><rect x="120" y="13.3" width="1.8" height="23.6" fill="#e2e2e2"/></svg>
<svg class="a" style="left:701px;top:147px;" width="26" height="26" viewBox="0 0 26 26" preserveAspectRatio="none"><rect x="0.75" y="0.75" width="24.5" height="24.5" rx="5" fill="#3b82f6" stroke="#3d7bf0" stroke-width="1.5"/><g stroke="#fff" stroke-width="1.95" stroke-linecap="round" fill="none"><path d="M7.80 20.28L14.56 6.24"/><path d="M11.44 6.24L18.20 20.28"/><path d="M5.72 16.64H20.28"/></g></svg>
<div class="t" style="left:738.0px;top:151.80px;font-size:21.5px;color:#262626;font-weight:normal;font-family:'Liberation Sans',sans-serif;letter-spacing:0.9px;">StudentsAndCourses</div>
<svg class="a" style="left:970px;top:151px;" width="8" height="21" viewBox="0 0 8 21" preserveAspectRatio="none"><path d="M1.3 1.3L6.7 10.5L1.3 19.7" fill="none" stroke="#8a8a8a" stroke-width="2.2" stroke-linecap="round" stroke-linejoin="round"/></svg>
<svg class="a" style="left:1265px;top:151px;" width="8" height="21" viewBox="0 0 8 21" preserveAspectRatio="none"><path d="M1.3 1.3L6.7 10.5L1.3 19.7" fill="none" stroke="#8a8a8a" stroke-width="2.2" stroke-linecap="round" stroke-linejoin="round"/></svg>
<svg class="a" style="left:1465px;top:151px;" width="8" height="21" viewBox="0 0 8 21" preserveAspectRatio="none"><path d="M1.3 1.3L6.7 10.5L1.3 19.7" fill="none" stroke="#8a8a8a" stroke-width="2.2" stroke-linecap="round" stroke-linejoin="round"/></svg>
<svg class="a" style="left:1871px;top:151px;" width="8" height="21" viewBox="0 0 8 21" preserveAspectRatio="none"><path d="M1.3 1.3L6.7 10.5L1.3 19.7" fill="none" stroke="#8a8a8a" stroke-width="2.2" stroke-linecap="round" stroke-linejoin="round"/></svg>
<svg class="a" style="left:995px;top:150px;" width="26" height="20" viewBox="0 0 29 24" preserveAspectRatio="none"><path d="M3.5 0H10c1 0 1.6.3 2.3 1l1.5 1.4H25.5A3.5 3.5 0 0 1 29 5.9V20.5A3.5 3.5 0 0 1 25.5 24H3.5A3.5 3.5 0 0 1 0 20.5V3.5A3.5 3.5 0 0 1 3.5 0z" fill="#878a8f"/><rect x="0" y="7.6" width="29" height="1.9" fill="#ffffff"/></svg>
<div class="t" style="left:1032.0px;top:151.80px;font-size:21.5px;color:#262626;font-weight:normal;font-family:'Liberation Sans',sans-serif;letter-spacing:0.9px;">StudentsAndCourses</div>
<svg class="a" style="left:1289px;top:150px;" width="26" height="20" viewBox="0 0 29 24" preserveAspectRatio="none"><path d="M3.5 0H10c1 0 1.6.3 2.3 1l1.5 1.4H25.5A3.5 3.5 0 0 1 29 5.9V20.5A3.5 3.5 0 0 1 25.5 24H3.5A3.5 3.5 0 0 1 0 20.5V3.5A3.5 3.5 0 0 1 3.5 0z" fill="#878a8f"/><rect x="0" y="7.6" width="29" height="1.9" fill="#ffffff"/></svg>
<div class="t" style="left:1327.0px;top:151.80px;font-size:21.5px;color:#262626;font-weight:normal;font-family:'Liberation Sans',sans-serif;letter-spacing:0.9px;">ViewModels</div>
<svg class="a" style="left:1487.08px;top:144.39px;" width="30.96" height="29.24" viewBox="0 0 36 34" preserveAspectRatio="none"><path d="M20.7 4.9C25.5 8 29.6 13.5 29 22L31.3 29C30 27.8 28.8 27.2 27.6 27.3C22 30.5 12 30.2 3.4 21.1C9 24.3 15 24.2 19.3 22.4C14.5 18.5 9.5 13.5 6.3 9C10 12 13.5 14.5 16.6 16.3C13.8 13.5 11.5 10.5 9.9 7.6C14 10.8 18.5 14.5 22.6 17.2C23.8 13 23.2 8.5 20.7 4.9Z" fill="#f07a45"/></svg>
<div class="t" style="left:1527.0px;top:151.80px;font-size:21.5px;color:#262626;font-weight:normal;font-family:'Liberation Sans',sans-serif;letter-spacing:0.9px;">EnrolmentsByCourseViewModel</div>
<div class="a" style="left:1894px;top:146px;width:28px;height:28px;border-radius:6px;background:#bd5ad6"></div>
<div class="t" style="left:1900.0px;top:149.38px;font-size:22px;color:#ffffff;font-weight:normal;font-family:'Liberation Sans',sans-serif;letter-spacing:0px;">C</div>
<div class="t" style="left:1932.0px;top:151.80px;font-size:21.5px;color:#262626;font-weight:normal;font-family:'Liberation Sans',sans-serif;letter-spacing:0.9px;">EnrolmentsByCourseViewModel</div>
<div class="a" style="left:684px;top:352px;width:2311px;height:40px;background:#ecf3fd"></div>
<div class="a" style="left:782px;top:353.9px;width:14px;height:1237.5px;background:#e6e6e6;border-radius:7px;box-shadow:0 0 0 1px rgba(255,255,255,.85)"></div>
<div class="a" style="left:782px;top:354px;width:14px;height:38px;background:#d7dce3;border-radius:7px 7px 0 0"></div>
<div class="a" style="left:782px;top:594.2px;width:14px;height:236.3px;background:#d4d4d4;border-radius:7px;box-shadow:0 0 0 1px rgba(255,255,255,.85)"></div>
<div class="a" style="left:782px;top:914.6px;width:14px;height:636.8px;background:#d4d4d4;border-radius:7px;box-shadow:0 0 0 1px rgba(255,255,255,.85)"></div>
<div class="a" style="left:782px;top:674.3px;width:14px;height:116.2px;background:#bcbcbc;border-radius:7px;box-shadow:0 0 0 1px rgba(255,255,255,.85)"></div>
<div class="a" style="left:782px;top:994.8px;width:14px;height:396.5px;background:#bcbcbc;border-radius:7px;box-shadow:0 0 0 1px rgba(255,255,255,.85)"></div>
<div class="a" style="left:782px;top:1355.2px;width:14px;height:116.2px;background:#bcbcbc;border-radius:7px;box-shadow:0 0 0 1px rgba(255,255,255,.85)"></div>
<div class="a" style="left:694px;top:272px;width:10px;height:1320px;background:#afc9fc;border:2px solid #2a72f8;border-radius:5px"></div>
<div class="t ln" style="left:689.5px;top:192.75px;height:40px;line-height:40px;color:#a6a6a6">7</div>
<div class="t ln" style="left:689.5px;top:232.80px;height:40px;line-height:40px;color:#a6a6a6">8</div>
<div class="t code" style="left:820.5px;top:233.60px;height:40px;line-height:40px"><span class="kw">import</span> Foundation</div>
<div class="t ln" style="left:689.5px;top:272.85px;height:40px;line-height:40px;color:#a6a6a6">9</div>
<div class="t ln" style="left:689.5px;top:312.90px;height:40px;line-height:40px;color:#a6a6a6">10</div>
<div class="t code" style="left:820.5px;top:313.70px;height:40px;line-height:40px">@Observable</div>
<div class="t ln" style="left:689.5px;top:352.95px;height:40px;line-height:40px;color:#1a1a1a">11</div>
<div class="t code" style="left:820.5px;top:353.75px;height:40px;line-height:40px"><span class="kw">class</span> <span class="td">EnrolmentsByCourseViewModel</span>: Observable {</div>
<div class="t ln" style="left:689.5px;top:393.00px;height:40px;line-height:40px;color:#a6a6a6">12</div>
<div class="t ln" style="left:689.5px;top:433.05px;height:40px;line-height:40px;color:#a6a6a6">13</div>
<div class="t code" style="left:820.5px;top:433.85px;height:40px;line-height:40px"><span class="cm">    // </span><span class="mk">MARK: Storied properties</span></div>
<div class="t ln" style="left:689.5px;top:473.10px;height:40px;line-height:40px;color:#a6a6a6">14</div>
<div class="t code" style="left:820.5px;top:473.90px;height:40px;line-height:40px">    <span class="kw">var</span> <span class="od">coursesWithStudents</span>: [<span class="pt">CourseStudent</span>] = []</div>
<div class="t ln" style="left:689.5px;top:513.15px;height:40px;line-height:40px;color:#a6a6a6">15</div>
<div class="t ln" style="left:689.5px;top:553.20px;height:40px;line-height:40px;color:#a6a6a6">16</div>
<div class="t code" style="left:820.5px;top:554.00px;height:40px;line-height:40px"><span class="cm">    // </span><span class="mk">MARK: Initializer(s)</span></div>
<div class="t ln" style="left:689.5px;top:593.25px;height:40px;line-height:40px;color:#a6a6a6">17</div>
<div class="t code" style="left:820.5px;top:594.05px;height:40px;line-height:40px">    <span class="kw">init</span>() {</div>
<div class="t ln" style="left:689.5px;top:633.30px;height:40px;line-height:40px;color:#a6a6a6">18</div>
<div class="t code" style="left:820.5px;top:634.10px;height:40px;line-height:40px"><span class="cm">        // Get all courses from the database, along with their enrolled students</span></div>
<div class="t ln" style="left:689.5px;top:673.35px;height:40px;line-height:40px;color:#a6a6a6">19</div>
<div class="t code" style="left:820.5px;top:674.15px;height:40px;line-height:40px">        <span class="syt">Task</span> {</div>
<div class="t ln" style="left:689.5px;top:713.40px;height:40px;line-height:40px;color:#a6a6a6">20</div>
<div class="t code" style="left:820.5px;top:714.20px;height:40px;line-height:40px">            <span class="kw">try</span> <span class="kw">await</span> <span class="pf">getCoursesWithStudents</span>()</div>
<div class="t ln" style="left:689.5px;top:753.45px;height:40px;line-height:40px;color:#a6a6a6">21</div>
<div class="t code" style="left:820.5px;top:754.25px;height:40px;line-height:40px">        }</div>
<div class="t ln" style="left:689.5px;top:793.50px;height:40px;line-height:40px;color:#a6a6a6">22</div>
<div class="t code" style="left:820.5px;top:794.30px;height:40px;line-height:40px">    }</div>
<div class="t ln" style="left:689.5px;top:833.55px;height:40px;line-height:40px;color:#a6a6a6">23</div>
<div class="t ln" style="left:689.5px;top:873.60px;height:40px;line-height:40px;color:#a6a6a6">24</div>
<div class="t code" style="left:820.5px;top:874.40px;height:40px;line-height:40px"><span class="cm">    // </span><span class="mk">MARK: Functions</span></div>
<div class="t ln" style="left:689.5px;top:913.65px;height:40px;line-height:40px;color:#a6a6a6">25</div>
<div class="t code" style="left:820.5px;top:914.45px;height:40px;line-height:40px">    <span class="kw">func</span> <span class="od">getCoursesWithStudents</span>() <span class="kw">async</span> <span class="kw">throws</span> {</div>
<div class="t ln" style="left:689.5px;top:953.70px;height:40px;line-height:40px;color:#a6a6a6">26</div>
<div class="t ln" style="left:689.5px;top:993.75px;height:40px;line-height:40px;color:#a6a6a6">27</div>
<div class="t code" style="left:820.5px;top:994.55px;height:40px;line-height:40px">        <span class="kw">do</span> {</div>
<div class="t ln" style="left:689.5px;top:1033.80px;height:40px;line-height:40px;color:#a6a6a6">28</div>
<div class="t code" style="left:820.5px;top:1034.60px;height:40px;line-height:40px">            <span class="kw">let</span> results: [<span class="pt">CourseStudent</span>] = <span class="kw">try</span> <span class="kw">await</span> <span class="pf">supabase</span></div>
<div class="t ln" style="left:689.5px;top:1073.85px;height:40px;line-height:40px;color:#a6a6a6">29</div>
<div class="t code" style="left:820.5px;top:1074.65px;height:40px;line-height:40px">                .from(<span class="st">&quot;course&quot;</span>)</div>
<div class="t ln" style="left:689.5px;top:1113.90px;height:40px;line-height:40px;color:#a6a6a6">30</div>
<div class="t code" style="left:820.5px;top:1114.70px;height:40px;line-height:40px">                .<span class="syf">select</span>(<span class="st">&quot;id, short_code, name, student(id, first_name, last_name)&quot;</span>)</div>
<div class="t ln" style="left:689.5px;top:1153.95px;height:40px;line-height:40px;color:#a6a6a6">31</div>
<div class="t code" style="left:820.5px;top:1154.75px;height:40px;line-height:40px">                .execute()</div>
<div class="t ln" style="left:689.5px;top:1194.00px;height:40px;line-height:40px;color:#a6a6a6">32</div>
<div class="t code" style="left:820.5px;top:1194.80px;height:40px;line-height:40px">                .<span class="syf">value</span></div>
<div class="t ln" style="left:689.5px;top:1234.05px;height:40px;line-height:40px;color:#a6a6a6">33</div>
<div class="t ln" style="left:689.5px;top:1274.10px;height:40px;line-height:40px;color:#a6a6a6">34</div>
<div class="t code" style="left:820.5px;top:1274.90px;height:40px;line-height:40px">            <span class="kw">self</span>.<span class="pf">coursesWithStudents</span> = results</div>
<div class="t ln" style="left:689.5px;top:1314.15px;height:40px;line-height:40px;color:#a6a6a6">35</div>
<div class="t ln" style="left:689.5px;top:1354.20px;height:40px;line-height:40px;color:#a6a6a6">36</div>
<div class="t code" style="left:820.5px;top:1355.00px;height:40px;line-height:40px">        } <span class="kw">catch</span> {</div>
<div class="t ln" style="left:689.5px;top:1394.25px;height:40px;line-height:40px;color:#a6a6a6">37</div>
<div class="t code" style="left:820.5px;top:1395.05px;height:40px;line-height:40px">            <span class="syf">debugPrint</span>(error)</div>
<div class="t ln" style="left:689.5px;top:1434.30px;height:40px;line-height:40px;color:#a6a6a6">38</div>
<div class="t code" style="left:820.5px;top:1435.10px;height:40px;line-height:40px">        }</div>
<div class="t ln" style="left:689.5px;top:1474.35px;height:40px;line-height:40px;color:#a6a6a6">39</div>
<div class="t ln" style="left:689.5px;top:1514.40px;height:40px;line-height:40px;color:#a6a6a6">40</div>
<div class="t code" style="left:820.5px;top:1515.20px;height:40px;line-height:40px">    }</div>
<div class="t ln" style="left:689.5px;top:1554.45px;height:40px;line-height:40px;color:#a6a6a6">41</div>
<div class="t code" style="left:820.5px;top:1555.25px;height:40px;line-height:40px">}</div>
<div class="t ln" style="left:689.5px;top:1594.50px;height:40px;line-height:40px;color:#a6a6a6">42</div>
<div class="a" style="left:2994px;top:190px;width:30px;height:1641px;background:#f9f9f9;border-left:2px solid #e9e9e9;border-right:2px solid #ececec"></div>
<div class="a" style="left:3002px;top:338px;width:16px;height:1117px;border-radius:8px;background:#7f7f7f"></div>
<svg class="a" style="left:690px;top:1840px;" width="340" height="48" viewBox="0 0 340 48" preserveAspectRatio="none"><path d="M20 12.2H42.3Q43.5 12.2 44.2 13.3L46.7 21L44.2 28.7Q43.5 29.8 42.3 29.8H20A3 3 0 0 1 17 26.8V15.2A3 3 0 0 1 20 12.2Z" fill="#3478f6"/><rect x="62" y="9.6" width="1.6" height="23" fill="#e0e0e0"/><g fill="none" stroke="#777777" stroke-width="1.6"><rect x="86.3" y="9.1" width="3.5" height="23.6" rx="1.75"/><rect x="98.1" y="9.1" width="3.5" height="23.6" rx="1.75"/></g><g fill="none" stroke="#b5b5b5" stroke-width="1.6"><path d="M141.5 25.6L153.6 12.8L166.5 25.6M155 25.6H166.5V17.3"/><rect x="146.5" y="29.6" width="15.1" height="3"/><path d="M214 8.3V25.6M207.4 19L214 25.6L220.9 19"/><rect x="206.3" y="29.6" width="15.4" height="3"/><path d="M274 8.6V25.6M267.6 15.1L274 8.6L280.7 15.1"/><rect x="266.2" y="29.6" width="15.6" height="3"/></g><rect x="304.5" y="9.6" width="1.6" height="23" fill="#e0e0e0"/></svg>
<svg class="a" style="left:1000px;top:1840px;" width="300" height="48" viewBox="0 0 300 48" preserveAspectRatio="none"><g fill="none" stroke="#777777" stroke-width="1.6" stroke-linejoin="round" stroke-linecap="round"><path d="M15.5 29V13.6L27.9 8.4M19.8 31.6V16.7L32.2 11.2M23.5 19.8L36.6 13.6V28.7L23.5 34.1Z"/><circle cx="77.8" cy="12.8" r="4.2"/><circle cx="94.2" cy="20.8" r="4.2"/><circle cx="77.8" cy="29.1" r="4.2"/><path d="M81.6 14.7L90.4 18.9M81.6 27.2L90.4 22.7"/><rect x="136.5" y="9.2" width="20.3" height="10" rx="5"/><rect x="136.5" y="23.4" width="20.3" height="10" rx="5"/><path d="M218.7 8.4L194 18.8L208.2 19.8L208.2 32.8Z" stroke-width="1.8"/></g><circle cx="141" cy="14" r="2.7" fill="#777777"/><circle cx="151.2" cy="27.9" r="2.7" fill="#777777"/><rect x="236.2" y="9.3" width="1.6" height="23.5" fill="#e0e0e0"/></svg>
<svg class="a" style="left:1256px;top:1849px;" width="23" height="23" viewBox="0 0 23 23" preserveAspectRatio="none"><rect x="0.75" y="0.75" width="21.5" height="21.5" rx="4.5" fill="#7a7a7a" stroke="#7a7a7a" stroke-width="1.5"/><g stroke="#fff" stroke-width="1.72" stroke-linecap="round" fill="none"><path d="M6.90 17.94L12.88 5.52"/><path d="M10.12 5.52L16.10 17.94"/><path d="M5.06 14.72H17.94"/></g></svg>
<div class="t" style="left:1292.0px;top:1852.30px;font-size:21.5px;color:#262626;font-weight:normal;font-family:'Liberation Sans',sans-serif;letter-spacing:0.9px;">StudentsAndCourses</div>
<div class="t" style="left:2774.0px;top:1852.30px;font-size:21.5px;color:#8a8a8a;font-weight:normal;font-family:'Liberation Sans',sans-serif;letter-spacing:1.3px;">Line: 11  Col: 3</div>
<div class="a" style="left:2954px;top:1850px;width:2px;height:24px;background:#dddddd"></div>
<svg class="a" style="left:2972px;top:1848px;" width="29" height="27" viewBox="0 0 29 27" preserveAspectRatio="none"><rect x="1.5" y="1.5" width="26" height="24" rx="4" fill="none" stroke="#6e6e6e" stroke-width="2.2"/><rect x="5" y="16.5" width="19" height="5.5" rx="2" fill="#6e6e6e"/></svg>
<svg class="a" style="left:0;top:1864px" width="24" height="24" viewBox="0 0 24 24"><path d="M0 0V24H24A24 24 0 0 1 0 0Z" fill="#fdfdfd"/></svg>
<svg class="a" style="left:0;top:1px" width="22" height="22" viewBox="0 0 22 22"><path d="M0 0H22A22 22 0 0 0 0 22Z" fill="#fdfdfd"/></svg>
<svg class="a" style="left:3000px;top:1864px" width="24" height="24" viewBox="0 0 24 24"><path d="M24 0V24H0A24 24 0 0 0 24 0Z" fill="#fdfdfd"/></svg>
<svg class="a" style="left:0;top:0" width="3024" height="1888" viewBox="0 0 3024 1888"><path d="M1408.6 1092.6L1462.8 1065.3L1462.8 1119.8Z" fill="#88b955"/><rect x="1460" y="1087.7" width="444" height="11" fill="#88b955"/><path d="M1333 1156.2L1386.7 1184.9L1342.1 1216.8Z" fill="#88b955"/><path d="M1364.4 1200.9C1523.9 1280.6 1711.2 1277.9 1883.0 1311.5" fill="none" stroke="#88b955" stroke-width="11" stroke-linecap="butt"/><path d="M1458.2 1157.3L1510.1 1188.9L1464.3 1218.4Z" fill="#88b955"/><path d="M1487.0 1203.6C1611.0 1260.2 1751.4 1279.2 1883.0 1310.0" fill="none" stroke="#88b955" stroke-width="11" stroke-linecap="butt"/><path d="M1613 1156.2L1662.5 1191.5L1614.3 1217.1Z" fill="#88b955"/><path d="M1638.0 1204.0C1710.9 1254.9 1798.9 1282.6 1883.0 1309.0" fill="none" stroke="#88b955" stroke-width="11" stroke-linecap="butt"/><path d="M1742.4 1156.5L1794 1188.7L1748 1217.6Z" fill="#2861f8"/><path d="M1771.0 1203.2C1841.0 1238.1 1917.4 1260.1 1993.5 1277.5" fill="none" stroke="#2861f8" stroke-width="11" stroke-linecap="butt"/><path d="M1863.3 1144.6L1922.4 1157.8L1888.4 1200.3Z" fill="#2861f8"/><path d="M1905.4 1179Q1933.7 1191.9 2004 1203.2" fill="none" stroke="#2861f8" stroke-width="11"/><path d="M2037.2 1149L2097 1161.2L2064.6 1199.4Z" fill="#2861f8"/><path d="M2080.8 1180.3L2091 1188.5" fill="none" stroke="#2861f8" stroke-width="11"/><path d="M2196.7 1144.7L2136.6 1154.1L2168.2 1198.1Z" fill="#2861f8"/><path d="M2152.4 1176.1L2139.7 1191.5" fill="none" stroke="#2861f8" stroke-width="11"/></svg>
<div class="t" style="left:1921.5px;top:1066.64px;font-size:53px;color:#88b955;font-weight:normal;font-family:'Liberation Sans',sans-serif;letter-spacing:0px;">Matches name of `course` table in database</div>
<div class="t" style="left:2012.0px;top:1182.44px;font-size:53px;color:#2861f8;font-weight:normal;font-family:'Liberation Sans',sans-serif;letter-spacing:0px;">Columns from `student` table</div>
<div class="t" style="left:1997.0px;top:1247.44px;font-size:53px;color:#2861f8;font-weight:normal;font-family:'Liberation Sans',sans-serif;letter-spacing:0px;">Matches `student` table in database</div>
<div class="t" style="left:1895.0px;top:1298.44px;font-size:53px;color:#88b955;font-weight:normal;font-family:'Liberation Sans',sans-serif;letter-spacing:0px;">Columns we want from the</div>
<div class="t" style="left:1894.8px;top:1362.64px;font-size:53px;color:#88b955;font-weight:normal;font-family:'Liberation Sans',sans-serif;letter-spacing:0px;">`course` table</div>
</body></html>
